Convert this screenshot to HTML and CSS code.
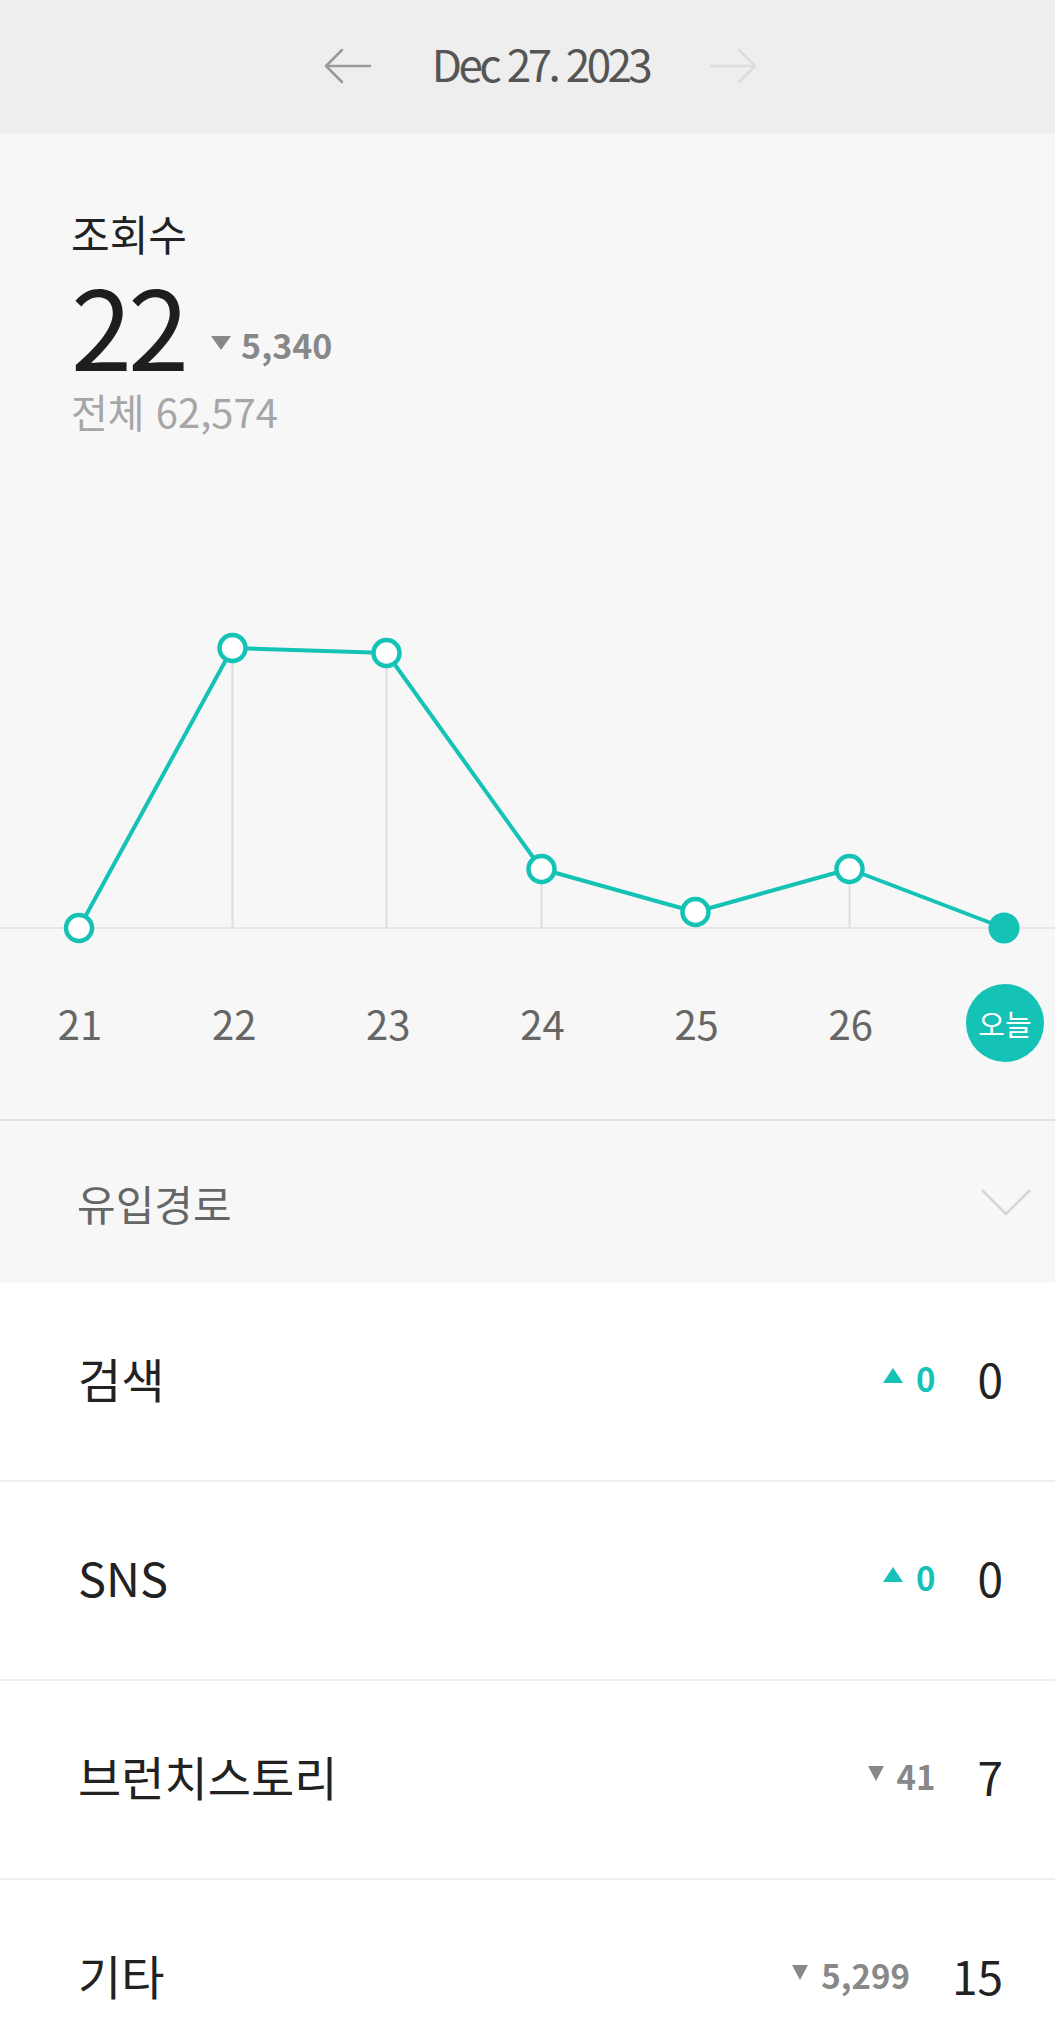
FILE: index.html
```html
<!DOCTYPE html>
<html lang="ko">
<head>
    <meta charset="UTF-8">
    <meta name="viewport" content="width=device-width, initial-scale=1.0">
    <title>조회수 통계</title>
    <link rel="stylesheet" href="styles.css">
</head>
<body>
    <header class="date-nav">
        <svg class="nav-arrow prev" width="48" height="36" viewBox="0 0 48 36">
            <path d="M46 18 H3 M18 2 L2 18 L18 34" />
        </svg>
        <span class="date-title">Dec 27. 2023</span>
        <svg class="nav-arrow next" width="48" height="36" viewBox="0 0 48 36">
            <path d="M2 18 H45 M30 2 L46 18 L30 34" />
        </svg>
    </header>

    <section class="overview">
        <div class="summary">
            <div class="summary-label">조회수</div>
            <div class="summary-count"><span class="count">22</span><span class="delta down"><svg class="tri" width="20" height="14" viewBox="0 0 20 14"><path d="M0 0 H20 L10 14 Z" /></svg>5,340</span></div>
            <div class="summary-total">전체 62,574</div>
        </div>

        <svg class="chart" width="1055" height="526" viewBox="0 0 1055 526">
            <line class="base" x1="0" y1="494" x2="1055" y2="494" />
            <line class="grid" x1="232.5" y1="214" x2="232.5" y2="494" />
            <line class="grid" x1="386.5" y1="219" x2="386.5" y2="494" />
            <line class="grid" x1="541.5" y1="435" x2="541.5" y2="494" />
            <line class="grid" x1="695.5" y1="478" x2="695.5" y2="494" />
            <line class="grid" x1="849.5" y1="435" x2="849.5" y2="494" />
            <polyline class="trend" points="79,494 232.5,214 386.5,219 541.5,435 695.5,478 849.5,435 1004,494" />
            <circle class="dot" cx="79" cy="494" r="13" />
            <circle class="dot" cx="232.5" cy="214" r="13" />
            <circle class="dot" cx="386.5" cy="219" r="13" />
            <circle class="dot" cx="541.5" cy="435" r="13" />
            <circle class="dot" cx="695.5" cy="478" r="13" />
            <circle class="dot" cx="849.5" cy="435" r="13" />
            <circle class="dot current" cx="1004" cy="494" r="15.5" />
        </svg>

        <div class="days">
            <span class="day">21</span>
            <span class="day">22</span>
            <span class="day">23</span>
            <span class="day">24</span>
            <span class="day">25</span>
            <span class="day">26</span>
            <span class="day"><span class="today">오늘</span></span>
        </div>
    </section>

    <section class="source-head">
        <span>유입경로</span>
        <svg class="chevron" width="50" height="26" viewBox="0 0 50 26">
            <path d="M1 1 L25 25 L49 1" />
        </svg>
    </section>

    <ul class="source-list">
        <li class="source-row">
            <span class="source-name">검색</span>
            <span class="source-stats">
                <span class="change up"><svg class="tri" width="20" height="15" viewBox="0 0 20 15"><path d="M10 0 L20 15 H0 Z" /></svg>0</span>
                <span class="source-value">0</span>
            </span>
        </li>
        <li class="source-row">
            <span class="source-name">SNS</span>
            <span class="source-stats">
                <span class="change up"><svg class="tri" width="20" height="15" viewBox="0 0 20 15"><path d="M10 0 L20 15 H0 Z" /></svg>0</span>
                <span class="source-value">0</span>
            </span>
        </li>
        <li class="source-row">
            <span class="source-name">브런치스토리</span>
            <span class="source-stats">
                <span class="change down"><svg class="tri" width="16" height="15" viewBox="0 0 16 15"><path d="M0 0 H16 L8 15 Z" /></svg>41</span>
                <span class="source-value">7</span>
            </span>
        </li>
        <li class="source-row">
            <span class="source-name">기타</span>
            <span class="source-stats">
                <span class="change down"><svg class="tri" width="16" height="15" viewBox="0 0 16 15"><path d="M0 0 H16 L8 15 Z" /></svg>5,299</span>
                <span class="source-value">15</span>
            </span>
        </li>
    </ul>
</body>
</html>
```

FILE: styles.css
```css
body {
    margin: 0;
    font-family: "Noto Sans CJK KR", "Noto Sans", sans-serif;
    background-color: #ffffff;
    color: #222222;
    overflow-x: hidden;
}

/* date navigation */
.date-nav {
    height: 133px;
    display: flex;
    align-items: center;
    justify-content: center;
    gap: 60px;
    padding-left: 26px;
    background-color: #eeeeee;
}

.date-title {
    margin-bottom: 8px;
    font-size: 44px;
    letter-spacing: -3.6px;
    color: #555555;
    line-height: 1;
}

.nav-arrow {
    margin-bottom: 2px;
}

.nav-arrow path {
    fill: none;
    stroke-width: 2.5;
    stroke-linecap: round;
    stroke-linejoin: round;
}

.nav-arrow.prev path {
    stroke: #9a9a9a;
}

.nav-arrow.next path {
    stroke: #dddddd;
}

/* views overview */
.overview {
    background-color: #f7f7f7;
    padding-bottom: 33px;
    border-bottom: 2px solid #e2e2e2;
}

.summary {
    padding: 76px 71px 0;
}

.summary-label {
    font-size: 42px;
    line-height: 48px;
    color: #222222;
}

.summary-count {
    margin-top: 10px;
    font-size: 110px;
    line-height: 112px;
    white-space: nowrap;
}

.count {
    letter-spacing: -4px;
    color: #1e1e1e;
}

.delta {
    margin-left: 26px;
    font-size: 34px;
    font-weight: 700;
    line-height: 1;
    color: #888888;
    vertical-align: 12px;
}

.delta .tri {
    margin-right: 10px;
    vertical-align: 9px;
}

.down .tri path {
    fill: #888888;
}

.up .tri path {
    fill: #14c2b6;
}

.summary-total {
    margin-top: 10px;
    font-size: 40px;
    line-height: 45px;
    color: #a6a6a6;
}

.chart {
    display: block;
}

.chart .base {
    stroke: #e6e6e6;
    stroke-width: 2;
}

.chart .grid {
    stroke: #dedede;
    stroke-width: 2;
}

.chart .trend {
    fill: none;
    stroke: #14c2b6;
    stroke-width: 4;
    stroke-linejoin: round;
}

.chart .dot {
    fill: #ffffff;
    stroke: #14c2b6;
    stroke-width: 4.5;
}

.chart .dot.current {
    fill: #14c2b6;
    stroke: none;
}

.days {
    height: 126px;
    display: flex;
    align-items: center;
    justify-content: space-between;
    padding: 0 0 0 30px;
}

.day {
    width: 100px;
    display: flex;
    justify-content: center;
    font-size: 40px;
    line-height: 1;
    color: #666666;
}

.today {
    width: 78px;
    height: 78px;
    border-radius: 50%;
    background-color: #14c2b6;
    color: #ffffff;
    font-size: 29px;
    display: flex;
    align-items: center;
    justify-content: center;
}

/* traffic sources */
.source-head {
    height: 162px;
    display: flex;
    align-items: center;
    justify-content: space-between;
    padding: 0 24px 0 77px;
    background-color: #f7f7f7;
    font-size: 42px;
    color: #666666;
}

.chevron path {
    fill: none;
    stroke: #d6d6d6;
    stroke-width: 2.5;
}

.source-list {
    list-style: none;
    margin: 0;
    padding: 0;
}

.source-row {
    height: 189px;
    display: flex;
    align-items: center;
    justify-content: space-between;
    padding: 0 52px 8px 78px;
    border-bottom: 2px solid #eeeeee;
}

.source-name {
    font-size: 47px;
    color: #222222;
}

.source-stats {
    display: flex;
    align-items: center;
    gap: 42px;
}

.change {
    font-size: 33px;
    font-weight: 700;
    color: #888888;
}

.change.up {
    color: #14c2b6;
}

.change .tri {
    margin-right: 13px;
    vertical-align: 9px;
}

.source-value {
    font-size: 46px;
    color: #222222;
}
```
